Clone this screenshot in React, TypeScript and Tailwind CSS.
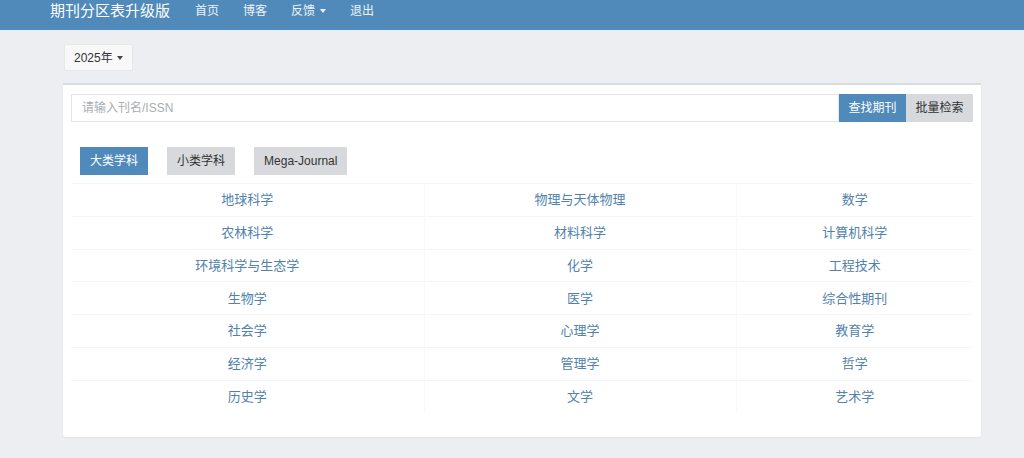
import { useState } from 'react'

const subjects = [
  ['地球科学', '物理与天体物理', '数学'],
  ['农林科学', '材料科学', '计算机科学'],
  ['环境科学与生态学', '化学', '工程技术'],
  ['生物学', '医学', '综合性期刊'],
  ['社会学', '心理学', '教育学'],
  ['经济学', '管理学', '哲学'],
  ['历史学', '文学', '艺术学'],
]

const tabs = ['大类学科', '小类学科', 'Mega-Journal']

export default function App() {
  const [tab, setTab] = useState(0)

  return (
    <div
      className="min-h-[458px] bg-[#eceef2] text-[#333]"
      style={{ fontFamily: '"Liberation Sans", "Noto Sans CJK SC", sans-serif' }}
    >
      {/* Navbar */}
      <nav className="h-[30px] bg-[#4f8abb] flex items-start pt-[1px] pl-[50px]">
        <span className="text-white text-[15px] leading-[20px]">期刊分区表升级版</span>
        <div className="flex items-center gap-[24px] ml-[25px] text-[12px] leading-[20px] text-white/90">
          <a className="cursor-pointer">首页</a>
          <a className="cursor-pointer">博客</a>
          <a className="cursor-pointer flex items-center gap-[5px]">
            反馈
            <span className="w-0 h-0 border-x-[3px] border-x-transparent border-t-[4px] border-t-white/90" />
          </a>
          <a className="cursor-pointer">退出</a>
        </div>
      </nav>

      <div className="pl-[63px] pr-[43px]">
        {/* Year */}
        <div className="pt-[14px]">
          <button className="h-[27px] px-[9px] ml-[1px] bg-[#f8f8f9] border border-[#e6e8eb] rounded-[2px] text-[12px] text-[#333] flex items-center gap-[4px]">
            2025年
            <span className="w-0 h-0 border-x-[3px] border-x-transparent border-t-[4px] border-t-[#444]" />
          </button>
        </div>

        {/* Card */}
        <div className="mt-[12px] bg-white border-t-2 border-[#d8dbe0] rounded-b-[3px] px-[8px] pt-[9px] pb-[24px] shadow-[0_1px_2px_rgba(0,0,0,0.05)]">
          <div className="flex h-[28px]">
            <input
              className="flex-1 border border-[#e4e6ea] px-[10px] text-[12px] text-[#333] placeholder:text-[#a9adb3] outline-none"
              placeholder="请输入刊名/ISSN"
            />
            <button className="w-[67px] bg-[#4f8abb] text-white text-[12px]">查找期刊</button>
            <button className="w-[67px] bg-[#d7d9dd] text-[#333] text-[12px]">批量检索</button>
          </div>

          <div className="flex gap-[19px] mt-[25px] ml-[9px]">
            {tabs.map((t, i) => (
              <button
                key={t}
                onClick={() => setTab(i)}
                className={`h-[28px] px-[10px] text-[12px] ${
                  i === tab ? 'bg-[#4f8abb] text-white' : 'bg-[#d7d9dd] text-[#333]'
                }`}
              >
                {t}
              </button>
            ))}
          </div>

          <table className="w-full mt-[8px] text-[13px] text-[#5282ab] border-collapse">
            <tbody>
              {subjects.map((row, r) => (
                <tr key={r} className="h-[32.8px] border-t border-[#f4f5f7]">
                  {row.map((s, c) => (
                    <td
                      key={s}
                      className={`text-center cursor-pointer ${
                        c === 0 ? 'w-[353px]' : c === 1 ? 'w-[312px] border-l border-[#f7f8f9]' : 'border-l border-[#f7f8f9]'
                      }`}
                    >
                      {s}
                    </td>
                  ))}
                </tr>
              ))}
            </tbody>
          </table>
        </div>
      </div>
    </div>
  )
}
